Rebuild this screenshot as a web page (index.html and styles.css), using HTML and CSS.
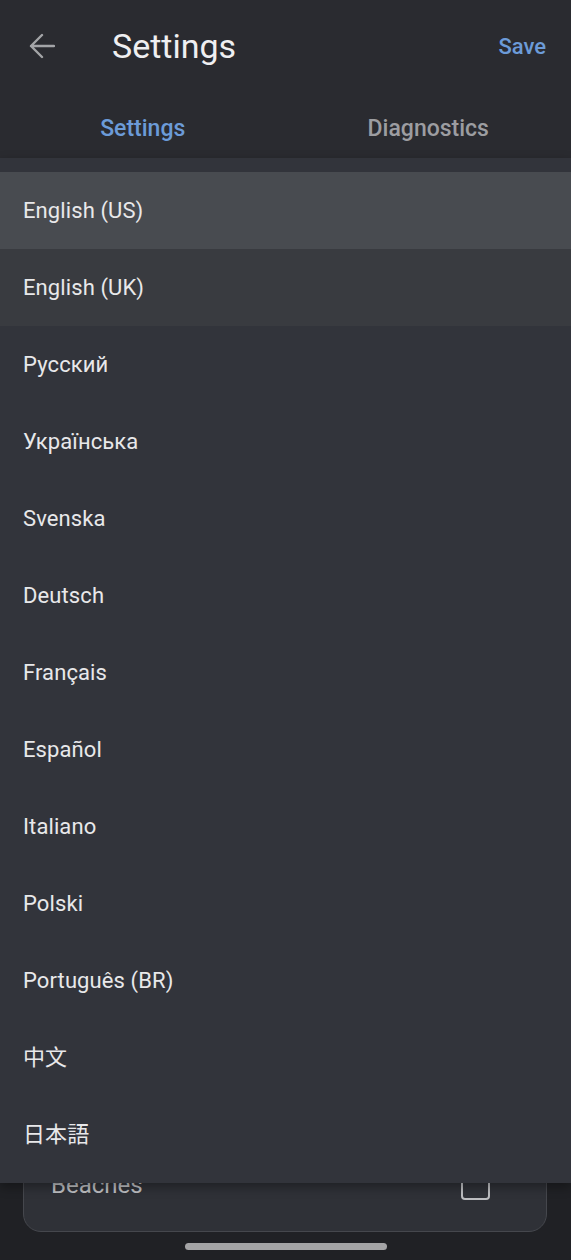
FILE: index.html
```html
<!DOCTYPE html>
<html lang="en">
<head>
    <meta charset="UTF-8">
    <meta name="viewport" content="width=device-width, initial-scale=1.0">
    <title>Settings</title>
    <link rel="stylesheet" href="styles.css">
</head>
<body>
    <div class="app">
        <header class="appbar">
            <div class="toolbar">
                <svg class="back" width="26" height="26" viewBox="0 0 26 26">
                    <path d="M25 13H2M13 2L2 13l11 11" fill="none" stroke="#a3a4a7" stroke-width="2.4" stroke-linecap="round" stroke-linejoin="round"/>
                </svg>
                <h1 class="title">Settings</h1>
                <button class="save">Save</button>
            </div>
            <nav class="tabs">
                <div class="tab active">Settings</div>
                <div class="tab">Diagnostics</div>
            </nav>
        </header>

        <main class="content">
            <div class="card">
                <div class="card-row">
                    <span>Beaches</span>
                    <span class="checkbox"></span>
                </div>
            </div>
        </main>

        <div class="navbar">
            <div class="pill"></div>
        </div>

        <!-- language dropdown, open -->
        <ul class="menu">
            <li class="selected">English (US)</li>
            <li class="hover">English (UK)</li>
            <li>Русский</li>
            <li>Українська</li>
            <li>Svenska</li>
            <li>Deutsch</li>
            <li>Français</li>
            <li>Español</li>
            <li>Italiano</li>
            <li>Polski</li>
            <li>Português (BR)</li>
            <li class="cjk" lang="zh">中文</li>
            <li class="cjk" lang="ja">日本語</li>
        </ul>
    </div>
</body>
</html>
```

FILE: styles.css
```css
* {
    margin: 0;
    padding: 0;
    box-sizing: border-box;
}
body {
    font-family: Roboto, "Noto Sans CJK SC", "Noto Sans CJK JP", sans-serif;
    background: #202125;
    color: #e8e8ea;
}
.app {
    position: relative;
    width: 571px;
    height: 1260px;
    display: flex;
    flex-direction: column;
    overflow: hidden;
}
.appbar {
    background: #2a2b30;
    height: 158px;
}
.toolbar {
    height: 92px;
    display: flex;
    align-items: center;
    padding: 0 25px 0 29px;
}
.back {
    flex: none;
}
.title {
    font-size: 34px;
    font-weight: 400;
    color: #efeff1;
    margin-left: 57px;
    flex: 1;
}
.save {
    background: none;
    border: none;
    font-family: inherit;
    font-size: 22px;
    font-weight: 500;
    color: #6c9bd8;
}
.tabs {
    display: flex;
    height: 66px;
    padding-top: 6px;
}
.tab {
    flex: 1;
    display: flex;
    align-items: center;
    justify-content: center;
    font-size: 23px;
    font-weight: 500;
    color: #9c9da1;
}
.tab.active {
    color: #6c9bd8;
}
.content {
    flex: 1;
    display: flex;
    flex-direction: column;
    justify-content: flex-end;
    padding: 0 24px 0 23px;
}
.card {
    min-height: 300px;
    display: flex;
    flex-direction: column;
    justify-content: flex-end;
    background: #2f3137;
    border: 1.5px solid #45474d;
    border-radius: 18px;
    padding: 0 56px 22px 27px;
}
.card-row {
    height: 48px;
    display: flex;
    align-items: center;
    justify-content: space-between;
    font-size: 24px;
    color: #bdbec1;
}
.checkbox {
    width: 29px;
    height: 29px;
    border: 2.5px solid #bdbec1;
    border-radius: 4px;
}
.navbar {
    height: 28px;
    display: flex;
    align-items: center;
    justify-content: center;
}
.pill {
    width: 202px;
    height: 7px;
    border-radius: 4px;
    background: #a4a4a6;
}
.menu {
    position: absolute;
    top: 158px;
    left: 0;
    right: 0;
    list-style: none;
    background: #32343b;
    padding: 14px 0 10px;
    box-shadow: 0 4px 10px rgba(0, 0, 0, 0.35);
}
.menu li {
    height: 77px;
    display: flex;
    align-items: center;
    padding-left: 23px;
    font-size: 22px;
    letter-spacing: 0.1px;
    color: #e8e8ea;
}
.menu li.cjk {
    padding-bottom: 6px;
}
.menu li.selected {
    background: #484b50;
}
.menu li.hover {
    background: #393b40;
}
```
